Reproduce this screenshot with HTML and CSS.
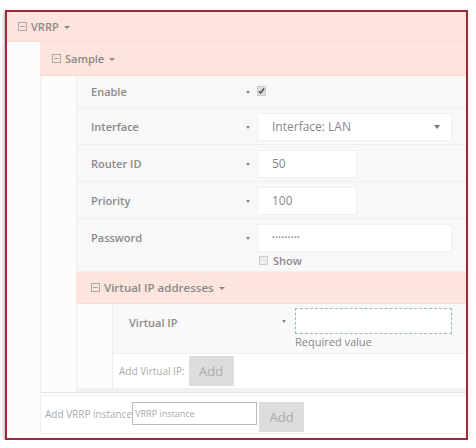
FILE: index.html
```html
<!DOCTYPE html>
<html lang="en">

<head>
  <meta charset="UTF-8" />
  <meta name="viewport" content="width=device-width, initial-scale=1.0" />
  <title>VRRP</title>
  <link rel="stylesheet" href="styles.css">
</head>

<body>
  <div class="panel">
    <div class="hd hd-top">
      <svg class="tog" width="9" height="9" viewBox="0 0 9 9"><rect x="0.5" y="0.5" width="8" height="8" fill="none" stroke="#aaa"/><path d="M2 4.5h5" stroke="#aaa"/></svg>
      VRRP <span class="caret"></span>
    </div>
    <div class="bd">
      <div class="group">
        <div class="hd hd-mid">
          <svg class="tog" width="9" height="9" viewBox="0 0 9 9"><rect x="0.5" y="0.5" width="8" height="8" fill="none" stroke="#aaa"/><path d="M2 4.5h5" stroke="#aaa"/></svg>
          Sample <span class="caret"></span>
        </div>
        <div class="bd">
          <div class="row row-enable">
            <div class="lbl">Enable</div>
            <span class="pre"></span>
            <div class="val"><span class="check"><svg width="8" height="8" viewBox="0 0 8 8"><path d="M1 4.2l2 2 4-5" fill="none" stroke="#444" stroke-width="1.6"/></svg></span></div>
          </div>
          <div class="row">
            <div class="lbl">Interface</div>
            <span class="pre"></span>
            <div class="val">
              <div class="select">Interface: LAN<span class="arrow"></span></div>
            </div>
          </div>
          <div class="row">
            <div class="lbl">Router ID</div>
            <span class="pre"></span>
            <div class="val"><div class="input short">50</div></div>
          </div>
          <div class="row">
            <div class="lbl">Priority</div>
            <span class="pre"></span>
            <div class="val"><div class="input short">100</div></div>
          </div>
          <div class="row">
            <div class="lbl">Password</div>
            <span class="pre"></span>
            <div class="val">
              <div class="input pass">•••••••••</div>
              <div class="show"><span class="box"></span>Show</div>
            </div>
          </div>

          <div class="group group-vip">
            <div class="hd hd-low">
              <svg class="tog" width="9" height="9" viewBox="0 0 9 9"><rect x="0.5" y="0.5" width="8" height="8" fill="none" stroke="#aaa"/><path d="M2 4.5h5" stroke="#aaa"/></svg>
              Virtual IP addresses <span class="caret"></span>
            </div>
            <div class="bd">
              <div class="row row-vip">
                <div class="lbl">Virtual IP</div>
                <span class="pre"></span>
                <div class="val">
                  <div class="input required"></div>
                  <div class="hint">Required value</div>
                </div>
              </div>
              <div class="add-row">
                <span class="add-lbl">Add Virtual IP:</span>
                <button class="btn">Add</button>
              </div>
            </div>
          </div>
        </div>
      </div>
      <div class="add-row add-main">
        <span class="add-lbl">Add VRRP instance</span>
        <input class="add-input" placeholder="VRRP instance" />
        <button class="btn">Add</button>
      </div>
    </div>
  </div>
</body>

</html>
```

FILE: styles.css
```css
* {
  margin: 0;
  padding: 0;
  box-sizing: border-box;
}

body {
  font-family: "Open Sans", "Liberation Sans", sans-serif;
  color: #888;
  background: #fff;
}

.panel {
  width: 463px;
  margin: 10px 0 0 5px;
  border: 2px solid #9d2a3a;
  box-shadow: -1px 1px 3px rgba(0, 0, 0, 0.3);
  background: #fff;
  padding-bottom: 4px;
}

/* collapsible section headers */
.hd {
  background: #fde4dc;
  display: flex;
  align-items: center;
  padding-left: 12px;
  font-size: 11px;
  font-weight: 600;
  color: #8a8a8a;
  border-bottom: 1px solid #f6dcd4;
}

.hd-top {
  height: 30px;
  padding-left: 11px;
}

.hd-mid {
  height: 34px;
}

.hd-low {
  height: 32px;
  padding-left: 15px;
  font-size: 11.5px;
}

.tog {
  margin-right: 4px;
}

.caret {
  display: inline-block;
  width: 0;
  height: 0;
  margin-left: 5px;
  margin-top: 2px;
  border-left: 3px solid transparent;
  border-right: 3px solid transparent;
  border-top: 3px solid #888;
}

.panel > .bd {
  padding-left: 33px;
  background: #fcfcfc;
}

.group > .bd {
  padding-left: 35px;
  border-left: 1px solid #eee;
  background: #fcfcfc;
}

.group {
  border-bottom: 1px solid #e6e6e6;
}

.group-vip {
  border-bottom: 4px solid #f2f2f2;
}

/* field rows */
.row {
  display: flex;
  align-items: flex-start;
  background: #f8f8f8;
  border-bottom: 1px solid #efefef;
  border-left: 1px solid #eee;
  padding: 5px 0 3px;
}

.lbl {
  width: 169px;
  padding-left: 14px;
  font-size: 11px;
  font-weight: 600;
  color: #8a8a8a;
  line-height: 28px;
}

/* small marker before each control */
.pre {
  width: 11px;
  height: 28px;
  display: flex;
  align-items: center;
}

.pre::before {
  content: "";
  border-left: 2.5px solid transparent;
  border-right: 2.5px solid transparent;
  border-top: 3px solid #888;
}

.val {
  flex: 1;
  padding-right: 14px;
}

.row-enable {
  padding: 2px 0 1px;
}

.check {
  display: inline-flex;
  align-items: center;
  justify-content: center;
  width: 9px;
  height: 10px;
  margin: 8px 0 0 0;
  background: #ddd;
  border: 1px solid #ccc;
}

.select,
.input {
  height: 28px;
  background: #fff;
  border: 1px solid #f0f0f0;
  font-size: 12px;
  color: #888;
  line-height: 26px;
  padding-left: 14px;
}

.select {
  display: flex;
  justify-content: space-between;
  align-items: center;
  padding-right: 11px;
}

.select .arrow {
  width: 0;
  height: 0;
  border-left: 3px solid transparent;
  border-right: 3px solid transparent;
  border-top: 4px solid #777;
}

.short {
  width: 100px;
}

.pass {
  font-size: 7px;
  letter-spacing: 0.5px;
}

.show {
  display: flex;
  align-items: center;
  font-size: 11px;
  font-weight: 600;
  color: #8a8a8a;
  margin-left: 2px;
  height: 16px;
}

.show .box {
  width: 9px;
  height: 9px;
  border: 1px solid #ccc;
  background: #eee;
  margin-right: 5px;
}

.row-vip {
  padding: 4px 0 4px;
  background: #f9f9f9;
}

.row-vip .lbl {
  padding-left: 16px;
  line-height: 30px;
}

.row-vip .pre {
  height: 26px;
}

.required {
  border: 1px dashed #9bb;
  height: 26px;
  margin-left: 2px;
}

.hint {
  font-size: 11px;
  color: #888;
  line-height: 14px;
  margin: 1px 0 0 2px;
}

/* "add item" rows */
.add-row {
  display: flex;
  align-items: center;
  background: #fff;
  border-left: 1px solid #eee;
  padding-left: 6px;
  height: 34px;
}

.add-lbl {
  font-size: 10px;
  color: #aaa;
  margin-right: 4px;
}

.btn {
  width: 45px;
  height: 30px;
  border: none;
  background: #ddd;
  color: #aaa;
  font-family: inherit;
  font-size: 13px;
}

.add-main {
  margin-top: 2px;
  height: 39px;
  padding: 6px 0 0 4px;
  align-items: flex-start;
  border-top: 1px solid #eee;
  border-bottom: 1px solid #eee;
}

.add-main .add-lbl {
  margin: 5px 0 0 0;
}

.add-input {
  width: 125px;
  height: 23px;
  border: 1px solid #bbb;
  font-family: inherit;
  font-size: 9px;
  color: #aaa;
  padding-left: 2px;
  margin-right: 2px;
  outline: none;
}

.add-input::placeholder {
  color: #aaa;
}
```
